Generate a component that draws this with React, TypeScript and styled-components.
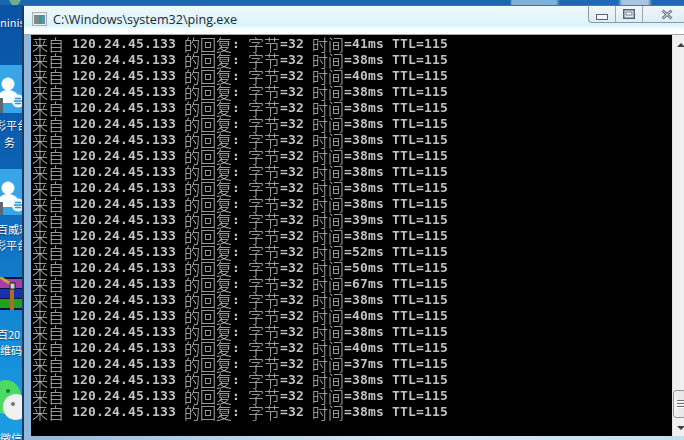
import React from "react";
import styled, { createGlobalStyle } from "styled-components";

const Global = createGlobalStyle`
  html, body { margin: 0; padding: 0; width: 684px; height: 440px; overflow: hidden; background: #0c5cac; }
  #root { width: 684px; height: 440px; }
`;

const Screen = styled.div`
  display: flex;
  width: 684px;
  height: 440px;
  overflow: hidden;
  background:
    linear-gradient(90deg, #1a66b0 0 510px, #7fb2da 512px 556px, #2068b2 560px 618px, #a8c6e0 622px 648px, #2068b2 652px) 0 0 / 100% 5px no-repeat,
    linear-gradient(180deg, #0a52a4 0%, #0c62b4 40%, #148ad6 75%, #1c9fe4 100%);
`;

const DesktopStrip = styled.div`
  flex: 0 0 22px;
  width: 22px;
  height: 440px;
  overflow: hidden;
  display: flex;
  flex-direction: column;
  font-family: "Noto Sans CJK SC", "Noto Sans", sans-serif;
`;

const Label = styled.div<{ $indent?: number; $top: number; $size?: number }>`
  flex: 0 0 auto;
  width: 22px;
  height: 14px;
  margin-top: ${(p) => p.$top}px;
  text-indent: ${(p) => p.$indent ?? 0}px;
  overflow: hidden;
  color: #fff;
  font-size: ${(p) => p.$size ?? 11}px;
  line-height: 14px;
  white-space: nowrap;
  text-shadow: 0 1px 1px #0008;
`;

const Tile = styled.div<{ $top: number; $height: number }>`
  flex: 0 0 auto;
  width: 22px;
  height: ${(p) => p.$height}px;
  margin-top: ${(p) => p.$top}px;
  background: #38a6e6;
  overflow: hidden;
`;

const IconDraw = styled.svg<{ $top?: number }>`
  flex: 0 0 auto;
  display: block;
  margin-top: ${(p) => p.$top ?? 0}px;
`;

const Win = styled.div`
  flex: 0 0 667px;
  height: 435px;
  margin-top: 5px;
  display: flex;
  flex-direction: column;
  border-left: 2px solid #1c3a5c;
  border-top: 1px solid #56708c;
  box-sizing: border-box;
  background: linear-gradient(90deg, #8fb8dc 0%, #d4ecfa 55%, #bfe0f4 100%);
`;

const TitleBar = styled.div`
  position: relative;
  flex: 0 0 29px;
  height: 29px;
  display: flex;
  align-items: center;
  padding: 0 0 2px 8px;
  box-sizing: border-box;
  gap: 6px;
  background: linear-gradient(180deg, #eef8fb 0%, #e3f6fb 45%, #d6f3f9 68%, #fbfdfe 85%, #ffffff 100%);
  border-bottom: 1px solid #a6a6a6;
`;

const Title = styled.span`
  font-family: "Open Sans", "Noto Sans", sans-serif;
  font-size: 12.6px;
  color: #1c2438;
  white-space: nowrap;
`;

const Caption = styled.div`
  position: absolute;
  top: -1px;
  left: 564px;
  width: 110px;
  height: 18px;
  display: flex;
  box-sizing: border-box;
  border: 1px solid #8f98a8;
  border-top-color: #6c7484;
  border-right: none;
  border-radius: 0 0 0 4px;
  background: linear-gradient(180deg, #f0f7fa, #dbeef5);
`;

const CaptionCell = styled.div<{ $w: number; $line?: boolean; $pad?: number }>`
  flex: 0 0 ${(p) => p.$w}px;
  height: 100%;
  display: flex;
  align-items: center;
  justify-content: center;
  box-sizing: border-box;
  padding-left: ${(p) => p.$pad ?? 0}px;
  border-right: ${(p) => (p.$line ? "1px solid #a0a8b4" : "none")};
`;

const Body = styled.div`
  flex: 1 1 auto;
  min-height: 0;
  display: flex;
  padding-left: 7px;
`;

const Console = styled.div`
  flex: 0 0 641px;
  height: 401px;
  background: #000;
  padding-top: 1px;
  box-sizing: border-box;
  overflow: hidden;
`;

const Lines = styled.div`
  color: #c0c0c0;
  will-change: transform;
`;

const Row = styled.div`
  height: 16px;
  line-height: 16px;
  padding-left: 1px;
  white-space: pre;
  display: flex;
`;

const Han = styled.span`
  font-family: "Noto Sans CJK SC", sans-serif;
  font-size: 16px;
  font-weight: 300;
  line-height: 16px;
  letter-spacing: 0;
`;

const Mono = styled.span`
  font-family: "DejaVu Sans Mono", "Liberation Mono", monospace;
  font-size: 13px;
  font-weight: 700;
  letter-spacing: 0.17px;
  line-height: 16px;
`;

const Scroll = styled.div`
  flex: 0 0 17px;
  width: 17px;
  height: 401px;
  display: flex;
  flex-direction: column;
  align-items: center;
  background: #f0f0f0;
  border-left: 1px solid #e4e4e4;
  box-sizing: border-box;
`;

const ArrowUp = styled.div`
  margin-top: 8px;
  width: 0;
  height: 0;
  border-left: 4px solid transparent;
  border-right: 4px solid transparent;
  border-bottom: 4px solid #404040;
`;

const ArrowDown = styled.div`
  margin: 8px 0 6px;
  width: 0;
  height: 0;
  border-left: 4px solid transparent;
  border-right: 4px solid transparent;
  border-top: 4px solid #404040;
`;

const Thumb = styled.div`
  margin-top: auto;
  width: 16px;
  height: 28px;
  box-sizing: border-box;
  border: 1px solid #9a9a9a;
  border-radius: 3px;
  background: linear-gradient(90deg, #f4f4f4, #dedede);
  display: flex;
  flex-direction: column;
  align-items: center;
  justify-content: center;
  gap: 1px;
`;

const Grip = styled.div`
  width: 8px;
  height: 1px;
  background: #707070;
  border-bottom: 1px solid #fff;
`;

const times = [41, 38, 40, 38, 38, 38, 38, 38, 38, 38, 38, 39, 38, 52, 50, 67, 38, 40, 38, 40, 37, 38, 38, 38];

const Person = () => (
  <IconDraw width="22" height="48" viewBox="0 0 22 48">
    <circle cx="8" cy="19" r="6.5" fill="#fff" />
    <path d="M-4 38c0-8 5-13 12-13s12 5 12 13z" fill="#fff" />
    <rect x="0" y="33" width="3" height="15" fill="#5a6a70" />
    <circle cx="18" cy="36" r="6.5" fill="#e8f6fc" />
    <path d="M14 36h8M15 33.5h6M15 38.5h6" stroke="#2e96d4" strokeWidth="1.3" />
  </IconDraw>
);

export default function App() {
  return (
    <Screen>
      <Global />
      <DesktopStrip>
        <IconDraw width="22" height="5" viewBox="0 0 22 5">
          <path d="M9 0h12l-3 5h-6z" fill="#6fb08a" />
        </IconDraw>
        <Label $top={10} $size={11}>ninis</Label>
        <Tile $top={36} $height={48}><Person /></Tile>
        <Label $top={5} $indent={-5}>彩平台</Label>
        <Label $top={3} $indent={4}>务</Label>
        <Tile $top={20} $height={46}><Person /></Tile>
        <Label $top={7} $indent={-3}>百威彩</Label>
        <Label $top={2} $indent={-5}>彩平台</Label>
        <IconDraw $top={25} width="22" height="33" viewBox="0 0 22 33">
          <rect width="22" height="33" fill="#101040" />
          <rect y="2" width="22" height="9" fill="#a83ca8" />
          <rect y="12" width="22" height="9" fill="#1830b0" />
          <rect y="22" width="22" height="9" fill="#20a020" />
          <path d="M0 0l12 8" stroke="#c8a040" strokeWidth="3" />
          <rect x="10" y="7" width="4" height="26" fill="#a87020" />
          <rect x="10" y="6" width="5" height="6" fill="#d0d0d0" stroke="#202020" />
        </IconDraw>
        <Label $top={17} $indent={-3}>百20</Label>
        <Label $top={2}>维码</Label>
        <IconDraw $top={23} width="22" height="42" viewBox="0 0 22 42">
          <ellipse cx="6" cy="17" rx="15" ry="17" fill="#4cd964" />
          <circle cx="8" cy="11" r="2" fill="#1a7a3a" />
          <ellipse cx="16" cy="27" rx="13" ry="13" fill="#f0f0f0" />
          <circle cx="13" cy="24" r="2" fill="#707070" />
        </IconDraw>
        <Label $top={9}>微信</Label>
      </DesktopStrip>
      <Win>
        <TitleBar>
          <IconDraw width="15" height="14" viewBox="0 0 15 14">
            <rect x="0.5" y="0.5" width="14" height="13" fill="#e8ecee" stroke="#a8b0b4" />
            <rect x="2" y="3" width="5" height="9" fill="#7a8a90" />
            <rect x="7" y="3" width="3" height="9" fill="#3aa070" />
            <rect x="10" y="3" width="3" height="9" fill="#5a90c0" />
          </IconDraw>
          <Title>C:\Windows\system32\ping.exe</Title>
          <Caption>
            <CaptionCell $w={27} $line>
              <IconDraw $top={6} width="12" height="6" viewBox="0 0 12 6">
                <rect x="0.5" y="0.5" width="11" height="5" fill="#f4f6fa" stroke="#5a6278" />
              </IconDraw>
            </CaptionCell>
            <CaptionCell $w={27} $line>
              <IconDraw width="12" height="10" viewBox="0 0 12 10">
                <rect x="0.75" y="0.75" width="10.5" height="8.5" fill="none" stroke="#5a6278" strokeWidth="1.5" />
                <rect x="3" y="3" width="6" height="3" fill="#fff" stroke="#5a6278" strokeWidth="0.8" />
              </IconDraw>
            </CaptionCell>
            <CaptionCell $w={42} $pad={6}>
              <IconDraw width="12" height="11" viewBox="0 0 12 11">
                <path d="M1.5 1.5l9 8M10.5 1.5l-9 8" stroke="#5a6278" strokeWidth="2.6" />
                <path d="M1.5 1.5l9 8M10.5 1.5l-9 8" stroke="#f4f6fa" strokeWidth="1" />
              </IconDraw>
            </CaptionCell>
          </Caption>
        </TitleBar>
        <Body>
          <Console>
            <Lines>
              {times.map((t, i) => (
                <Row key={i}>
                  <Han>来自</Han>
                  <Mono> 120.24.45.133 </Mono>
                  <Han>的回复</Han>
                  <Mono>: </Mono>
                  <Han>字节</Han>
                  <Mono>=32 </Mono>
                  <Han>时间</Han>
                  <Mono>={t}ms TTL=115</Mono>
                </Row>
              ))}
            </Lines>
          </Console>
          <Scroll>
            <ArrowUp />
            <Thumb>
              <Grip />
              <Grip />
              <Grip />
            </Thumb>
            <ArrowDown />
          </Scroll>
        </Body>
      </Win>
    </Screen>
  );
}
